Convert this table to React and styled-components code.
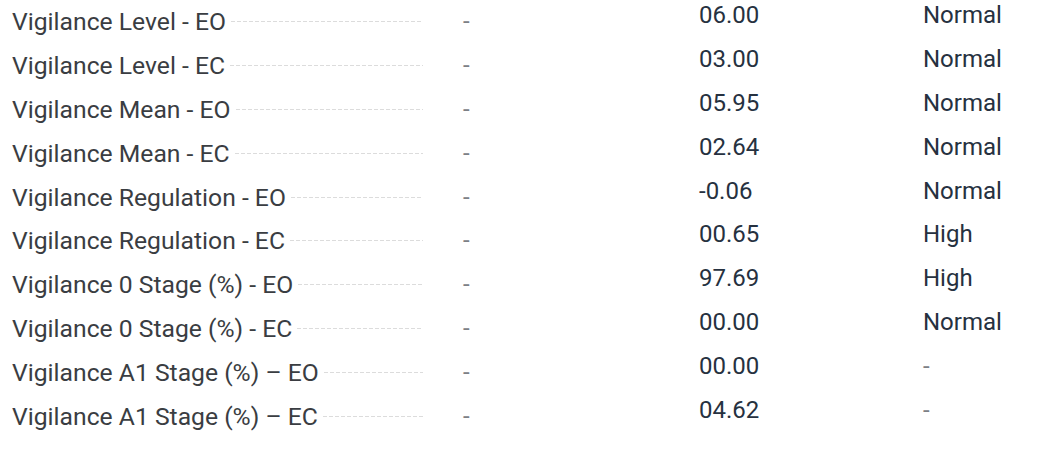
import styled, { createGlobalStyle } from "styled-components";

const rows = [
  { label: "Vigilance Level - EO", value: "06.00", status: "Normal" },
  { label: "Vigilance Level - EC", value: "03.00", status: "Normal" },
  { label: "Vigilance Mean - EO", value: "05.95", status: "Normal" },
  { label: "Vigilance Mean - EC", value: "02.64", status: "Normal" },
  { label: "Vigilance Regulation - EO", value: "-0.06", status: "Normal" },
  { label: "Vigilance Regulation - EC", value: "00.65", status: "High" },
  { label: "Vigilance 0 Stage (%) - EO", value: "97.69", status: "High" },
  { label: "Vigilance 0 Stage (%) - EC", value: "00.00", status: "Normal" },
  { label: "Vigilance A1 Stage (%) – EO", value: "00.00", status: "-" },
  { label: "Vigilance A1 Stage (%) – EC", value: "04.62", status: "-" },
];

function App() {
  return (
    <>
      <GlobalStyle />
      <Table>
        {rows.map((row) => (
          <Row key={row.label}>
            <LabelCell>
              <Label>{row.label}</Label>
              <Leader />
            </LabelCell>
            <Empty>-</Empty>
            <Value>{row.value}</Value>
            <Status $muted={row.status === "-"}>{row.status}</Status>
          </Row>
        ))}
      </Table>
    </>
  );
}

const GlobalStyle = createGlobalStyle`
  body {
    margin: 0;
    background: #fff;
    font-family: Roboto, "Liberation Sans", sans-serif;
  }
`;

const Table = styled.div`
  display: flex;
  flex-direction: column;
  padding-left: 12px;
`;

const Row = styled.div`
  display: grid;
  grid-template-columns: 413px 274px 224px 1fr;
  height: 43.9px;
  font-size: 24px;
`;

const LabelCell = styled.div`
  display: flex;
  align-items: center;
  height: 43px;
  min-width: 0;
`;

const Label = styled.span`
  font-size: 24.7px;
  color: #3a3d42;
  white-space: nowrap;
`;

const Leader = styled.span`
  flex: 1;
  height: 1px;
  margin: 0 2px 0 5px;
  background: repeating-linear-gradient(
    to right,
    #dcdcdc 0 4px,
    transparent 4px 6px
  );
`;

const Empty = styled.span`
  padding-left: 38px;
  line-height: 43px;
  color: #7d8085;
`;

const Value = styled.span`
  line-height: 30px;
  color: #263140;
`;

const Status = styled.span`
  line-height: 30px;
  color: ${(p) => (p.$muted ? "#7d8085" : "#263140")};
`;

export default App;
